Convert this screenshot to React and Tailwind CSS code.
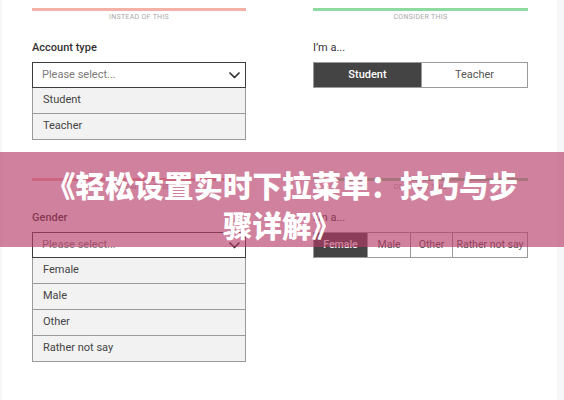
import React from "react";

function Chevron() {
  return (
    <svg width="11" height="7" viewBox="0 0 11 7" className="shrink-0">
      <path d="M1 1l4.5 4.5L10 1" fill="none" stroke="#333" strokeWidth="1.7" strokeLinecap="round" strokeLinejoin="round" />
    </svg>
  );
}

function Select({ label, options }) {
  return (
    <div>
      <div className="mt-[19px] text-[11px] leading-[14px] font-medium text-[#333]">{label}</div>
      <div className="mt-[7px] h-[26px] border-[1.5px] border-[#3d3d3d] bg-white pl-[9px] pr-[5px] flex items-center justify-between">
        <span className="text-[11px] text-[#7a7a7a]">Please select...</span>
        <Chevron />
      </div>
      {options.map((o) => (
        <div key={o} className="h-[26px] border-x border-b border-[#9a9a9a] bg-[#f2f2f2] px-[10px] flex items-center text-[11px] text-[#444]">
          {o}
        </div>
      ))}
    </div>
  );
}

function Segmented({ label, options, small }) {
  return (
    <div>
      <div className="mt-[19px] text-[11px] leading-[14px] text-[#333]">{label}</div>
      <div className="mt-[7px] h-[26px] flex border border-[#9a9a9a]">
        {options.map((o, i) => (
          <div
            key={o.t}
            style={{ width: o.w }}
            className={
              (small ? "text-[10.5px] " : "text-[11px] ") +
              (i === 0
                ? "h-full flex items-center justify-center bg-[#444444] text-white font-medium whitespace-nowrap"
                : "h-full flex items-center justify-center bg-white text-[#555] border-l border-[#9a9a9a] whitespace-nowrap")
            }
          >
            {o.t}
          </div>
        ))}
      </div>
    </div>
  );
}

function Section({ left, right }) {
  return (
    <div className="h-[170px] pt-[8px] pl-[30px] grid grid-cols-[214px_215px] gap-x-[67px]">
      <div>
        <div className="h-[3px] bg-[#f4b1a8]" />
        <div className="mt-[2px] text-center text-[7px] leading-[9px] tracking-[0.3px] text-[#a8a8a8]">INSTEAD OF THIS</div>
        {left}
      </div>
      <div>
        <div className="h-[3px] bg-[#8fdaa0]" />
        <div className="mt-[2px] text-center text-[7px] leading-[9px] tracking-[0.3px] text-[#a8a8a8]">CONSIDER THIS</div>
        {right}
      </div>
    </div>
  );
}

export default function App() {
  return (
    <div className="relative w-[564px] h-[400px] overflow-hidden bg-[#f6f7f9] font-[Roboto,sans-serif]">
      <div className="ml-[2px] w-[555px] h-[400px] bg-white">
        <Section
          left={<Select label="Account type" options={["Student", "Teacher"]} />}
          right={<Segmented label="I’m a..." options={[{ t: "Student", w: 107 }, { t: "Teacher", w: 106 }]} />}
        />
        <Section
          left={<Select label="Gender" options={["Female", "Male", "Other", "Rather not say"]} />}
          right={
            <Segmented
              small
              label="I’m a..."
              options={[
                { t: "Female", w: 53 },
                { t: "Male", w: 43 },
                { t: "Other", w: 42 },
                { t: "Rather not say", w: 75 },
              ]}
            />
          }
        />
      </div>
      <div className="absolute left-0 top-[152px] w-[564px] h-[95px] bg-[rgba(182,58,102,0.64)] pt-[12px] text-center text-white font-black text-[29.5px] leading-[40px] font-['Noto_Sans_CJK_SC',sans-serif]">
        《轻松设置实时下拉菜单：技巧与步
        <br />
        骤详解》
      </div>
    </div>
  );
}
